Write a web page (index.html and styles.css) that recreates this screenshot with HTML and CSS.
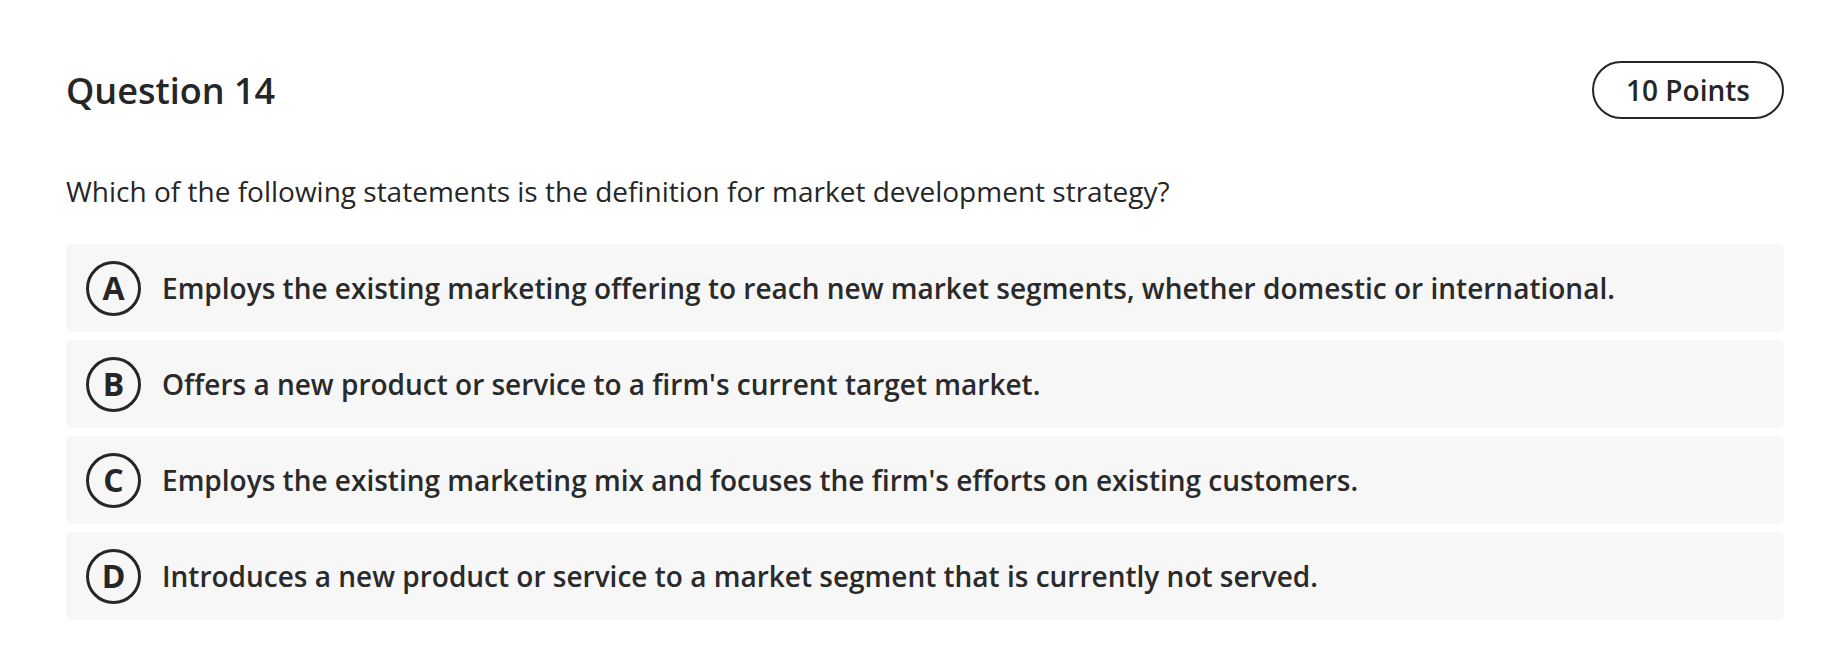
FILE: index.html
```html
<!DOCTYPE html>
<html lang="en">
<head>
<meta charset="utf-8">
<title>Question 14</title>
<link rel="stylesheet" href="styles.css">
</head>
<body>
<main class="question">
  <header class="q-head">
    <h1 class="q-title">Question 14</h1>
    <span class="q-points">10 Points</span>
  </header>
  <p class="q-text">Which of the following statements is the definition for market development strategy?</p>
  <ul class="options">
    <li class="option"><span class="opt-letter">A</span><span class="opt-text">Employs the existing marketing offering to reach new market segments, whether domestic or international.</span></li>
    <li class="option"><span class="opt-letter">B</span><span class="opt-text">Offers a new product or service to a firm's current target market.</span></li>
    <li class="option"><span class="opt-letter">C</span><span class="opt-text">Employs the existing marketing mix and focuses the firm's efforts on existing customers.</span></li>
    <li class="option"><span class="opt-letter">D</span><span class="opt-text">Introduces a new product or service to a market segment that is currently not served.</span></li>
  </ul>
</main>
</body>
</html>
```
FILE: styles.css
```css
html, body {
  margin: 0;
  padding: 0;
  background: #ffffff;
}
body {
  font-family: "Open Sans", "Liberation Sans", sans-serif;
  color: #262626;
}
.question {
  padding: 61px 40px 0 66px;
}
.q-head {
  display: flex;
  align-items: center;
  justify-content: space-between;
  height: 58px;
}
.q-title {
  margin: 0;
  font-size: 36px;
  font-weight: 600;
  line-height: 49px;
}
.q-points {
  box-sizing: border-box;
  height: 58px;
  width: 192px;
  border: 2px solid #262626;
  border-radius: 29px;
  display: flex;
  align-items: center;
  justify-content: center;
  font-size: 28px;
  font-weight: 600;
}
.q-text {
  margin: 53px 0 34px;
  font-size: 28px;
  font-weight: 400;
  line-height: 38px;
}
.options {
  list-style: none;
  margin: 0;
  padding: 0;
  display: flex;
  flex-direction: column;
  gap: 8px;
}
.option {
  box-sizing: border-box;
  height: 88px;
  background: #f7f7f7;
  border-radius: 5px;
  display: flex;
  align-items: center;
  padding-left: 20px;
  gap: 21px;
}
.opt-letter {
  box-sizing: border-box;
  width: 55px;
  height: 55px;
  flex: none;
  border: 3px solid #262626;
  border-radius: 50%;
  display: flex;
  align-items: center;
  justify-content: center;
  font-size: 32px;
  font-weight: 700;
  line-height: 1;
}
.opt-text {
  font-size: 28px;
  font-weight: 600;
  line-height: 38px;
  color: #2a2a2a;
}
```
